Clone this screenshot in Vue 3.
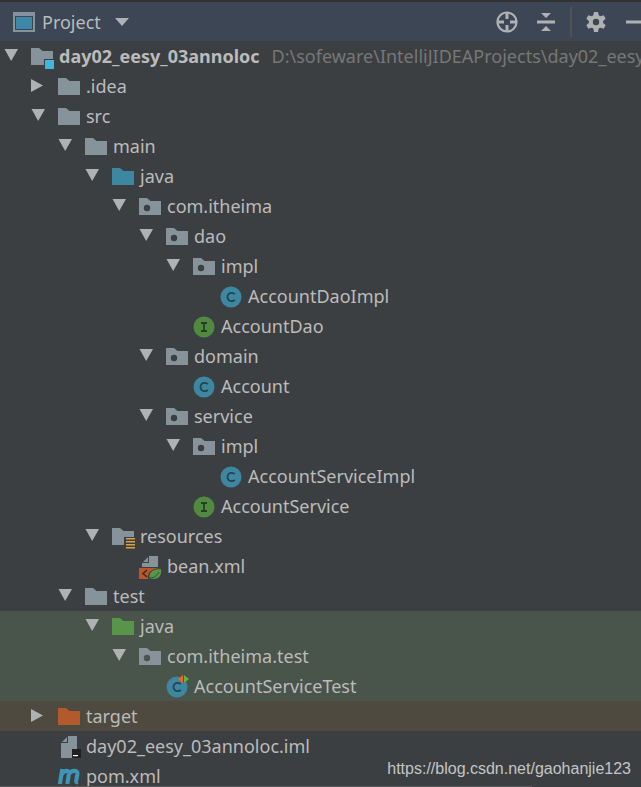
<script setup>
import { ref, computed } from 'vue'

const nodes = [
  { name: 'day02_eesy_03annoloc', depth: 0, icon: 'module', branch: true, open: true, path: 'D:\\sofeware\\IntelliJIDEAProjects\\day02_eesy_03annoloc' },
  { name: '.idea', depth: 1, icon: 'folder', branch: true, open: false },
  { name: 'src', depth: 1, icon: 'folder', branch: true, open: true },
  { name: 'main', depth: 2, icon: 'folder', branch: true, open: true },
  { name: 'java', depth: 3, icon: 'source', branch: true, open: true },
  { name: 'com.itheima', depth: 4, icon: 'package', branch: true, open: true },
  { name: 'dao', depth: 5, icon: 'package', branch: true, open: true },
  { name: 'impl', depth: 6, icon: 'package', branch: true, open: true },
  { name: 'AccountDaoImpl', depth: 7, icon: 'class' },
  { name: 'AccountDao', depth: 6, icon: 'interface' },
  { name: 'domain', depth: 5, icon: 'package', branch: true, open: true },
  { name: 'Account', depth: 6, icon: 'class' },
  { name: 'service', depth: 5, icon: 'package', branch: true, open: true },
  { name: 'impl', depth: 6, icon: 'package', branch: true, open: true },
  { name: 'AccountServiceImpl', depth: 7, icon: 'class' },
  { name: 'AccountService', depth: 6, icon: 'interface' },
  { name: 'resources', depth: 3, icon: 'resources', branch: true, open: true },
  { name: 'bean.xml', depth: 4, icon: 'spring' },
  { name: 'test', depth: 2, icon: 'folder', branch: true, open: true },
  { name: 'java', depth: 3, icon: 'tests', branch: true, open: true, tone: 'green' },
  { name: 'com.itheima.test', depth: 4, icon: 'package', branch: true, open: true, tone: 'green' },
  { name: 'AccountServiceTest', depth: 5, icon: 'testclass', tone: 'green' },
  { name: 'target', depth: 1, icon: 'excluded', branch: true, open: false, tone: 'brown' },
  { name: 'day02_eesy_03annoloc.iml', depth: 1, icon: 'iml' },
  { name: 'pom.xml', depth: 1, icon: 'maven' },
]

const tree = ref(nodes)
const folderIcons = ['module', 'folder', 'source', 'package', 'resources', 'tests', 'excluded']
const folderColors = { source: '#3d87a1', tests: '#58944a', excluded: '#b35a2c' }

const visible = computed(() => {
  const rows = []
  let hiddenBelow = Infinity
  for (const node of tree.value) {
    if (node.depth > hiddenBelow) continue
    hiddenBelow = node.branch && !node.open ? node.depth : Infinity
    rows.push(node)
  }
  return rows
})
</script>

<template>
  <main class="panel">
    <header class="bar">
      <button class="view" type="button">
        <svg class="window" viewBox="0 0 22 20" aria-hidden="true">
          <path fill="#87939a" d="M0 0h22v20H0z" />
          <path fill="#3c4654" d="M2 4h18v14H2z" />
          <path fill="#3d87a8" d="M3 5h16v12H3z" />
        </svg>
        <span>Project</span>
        <svg class="caret" viewBox="0 0 14 8" aria-hidden="true"><path fill="#afb1b3" d="M0 0h14L7 8z" /></svg>
      </button>
      <div class="tools">
        <button type="button" class="tool" aria-label="Select opened file">
          <svg viewBox="0 0 22 22" width="22" height="22">
            <circle cx="11" cy="11" r="9.5" fill="none" stroke="#afb1b3" stroke-width="2.2" />
            <path fill="none" stroke="#afb1b3" stroke-width="3" d="M11 1v7M11 14v7M1 11h7M14 11h7" />
          </svg>
        </button>
        <button type="button" class="tool" aria-label="Collapse all">
          <svg viewBox="0 0 22 22" width="22" height="22">
            <path fill="#afb1b3" d="M2 9.500h18v3H2zM6 2h10l-5 5zM6 20h10l-5-5z" />
          </svg>
        </button>
        <span class="divider"></span>
        <button type="button" class="tool" aria-label="Settings">
          <svg viewBox="0 0 22 22" width="22" height="22">
            <circle cx="11" cy="11" r="5.200" fill="none" stroke="#afb1b3" stroke-width="4" />
            <path fill="#afb1b3" d="M8.200 5l.8-4h4l.8 4zM8.200 17l.8 4h4l.8-4z" />
            <path fill="#afb1b3" transform="rotate(60 11 11)" d="M8.200 5l.8-4h4l.8 4zM8.200 17l.8 4h4l.8-4z" />
            <path fill="#afb1b3" transform="rotate(120 11 11)" d="M8.200 5l.8-4h4l.8 4zM8.200 17l.8 4h4l.8-4z" />
          </svg>
        </button>
        <button type="button" class="tool hide" aria-label="Hide">
          <svg viewBox="0 0 15 22" width="15" height="22"><path fill="#afb1b3" d="M0 9.500h15v3H0z" /></svg>
        </button>
      </div>
    </header>

    <ul class="tree" role="tree">
      <li
        v-for="(node, i) in visible"
        :key="i"
        class="row"
        :class="node.tone"
        role="treeitem"
        :aria-level="node.depth + 1"
        :aria-expanded="node.branch ? node.open : undefined"
        :style="{ '--depth': node.depth }"
      >
        <button v-if="node.branch" class="fold" type="button" :aria-label="node.open ? 'Collapse' : 'Expand'" @click="node.open = !node.open">
          <svg viewBox="0 0 14 14" width="14" height="14">
            <path fill="#afb1b3" :d="node.open ? 'M-.5 0h13.500L6.200 12z' : 'M-1 0l12 6.500L-1 13z'" />
          </svg>
        </button>
        <span v-else class="fold"></span>

        <svg class="icon" viewBox="0 0 24 24" aria-hidden="true">
          <template v-if="folderIcons.includes(node.icon)">
            <path :fill="folderColors[node.icon] || '#87939a'" d="M0 4h8l3.500 3H22v14H0z" />
            <circle v-if="node.icon === 'package'" class="hole" cx="8" cy="14" r="3.200" />
            <path v-if="node.icon === 'module'" fill="#3c3f41" d="M13 15h11v9H13z" />
            <path v-if="node.icon === 'module'" fill="#40b6e0" d="M14 16h9v9h-9z" />
            <template v-if="node.icon === 'resources'">
              <path fill="#3c3f41" d="M12 13h12v11H12z" />
              <path fill="#d9a343" d="M14 14h9v1.500h-9zM14 17h9v1.500h-9zM14 20h9v1.500h-9zM14 23h9v1.500h-9z" />
            </template>
          </template>
          <template v-else-if="node.icon === 'class' || node.icon === 'testclass'">
            <circle cx="11" cy="13" r="10.500" fill="#3d87a1" />
            <path fill="none" stroke="#25434e" stroke-width="1.800" d="M14.800 10.200A4.200 4.200 0 1 0 14.800 15.800" />
            <template v-if="node.icon === 'testclass'">
              <path fill="#49544a" d="M11 0h13v5.500L18 9z" />
              <path fill="#f26522" d="M17 1v8L12 5z" />
              <path fill="#62b543" d="M18 1v8L23 5z" />
            </template>
          </template>
          <template v-else-if="node.icon === 'interface'">
            <circle cx="11" cy="13" r="10.500" fill="#4f8a40" />
            <path fill="none" stroke="#293f25" stroke-width="1.800" d="M8 9h6M8 17h6M11 9v8" />
          </template>
          <template v-else-if="node.icon === 'spring'">
            <path fill="#87939a" d="M10 2h9v11H3V9h7zM9 3v5H4z" />
            <path fill="#bd5528" d="M0 14h22v11H0z" />
            <path fill="none" stroke="#43291f" stroke-width="1.600" d="M8 16l-4 3.500L8 23" />
            <path fill="#3c3f41" d="M9 25c-1-7 4-11 14-11v11z" />
            <path fill="#58944a" d="M11 25c-2-6 2-10 11-10 1 6-2 10-7 10-2 0-3-.5-4 0z" />
            <path fill="none" stroke="#2e4f2a" d="M11 24c5 0 7-3 9-6" />
          </template>
          <template v-else-if="node.icon === 'iml'">
            <path fill="#87939a" d="M10 2h9v22H3V9h7zM9 3v5H4z" />
            <path fill="#231f20" d="M14 15h9v9h-9z" />
            <path fill="#fff" d="M15 21h5v1.200h-5z" />
          </template>
          <template v-else>
            <path fill="none" stroke="#3f95b5" stroke-width="4.200" d="M4.300 5L1.900 20M3.500 10.500C6 6 11.500 5.500 10.900 10L9.300 20M11 10C13.500 6 20 5.500 19.400 10L18.200 17q-.2 1.500 1.800 1.200" />
          </template>
        </svg>

        <span class="name" :class="{ root: node.depth === 0 }">{{ node.name }}</span>
        <span v-if="node.path" class="path">{{ node.path }}</span>
      </li>
    </ul>

    <a class="credit" href="https://blog.csdn.net/gaohanjie123">https://blog.csdn.net/gaohanjie123</a>
  </main>
</template>

<style>
body {
  background: #3c3f41;
}
</style>

<style scoped>
.panel {
  position: relative;
  box-sizing: border-box;
  height: 100vh;
  overflow: hidden;
  border-top: 2px solid #323232;
  background: #3c3f41;
  color: #bbbbbb;
  font-family: "Noto Sans", "Open Sans", sans-serif;
  font-size: 18px;
}

.panel::after {
  content: "";
  position: absolute;
  bottom: 0;
  left: 0;
  width: 83%;
  height: 1px;
  background: #5a5a5a;
}

button {
  display: flex;
  align-items: center;
  padding: 0;
  border: 0;
  background: none;
  color: inherit;
  font: inherit;
}

.bar {
  display: flex;
  align-items: center;
  justify-content: space-between;
  height: 39px;
  padding-left: 13px;
  background: #3c4654;
}

.view {
  gap: 7px;
}

.window {
  width: 22px;
  height: 20px;
}

.caret {
  width: 14px;
  height: 8px;
  margin-left: 7px;
}

.tools {
  display: flex;
  align-items: center;
}

.tool {
  margin-right: 17px;
}

.divider {
  width: 2px;
  height: 30px;
  margin-right: 13px;
  margin-left: -4px;
  background: #515151;
}

.tool svg {
  display: block;
}

.divider + .tool {
  margin-right: 19px;
}

.tool.hide {
  margin-right: 0;
}

.tree {
  margin: 0;
  padding: 0;
  list-style: none;
}

.row {
  --surface: #3c3f41;
  display: flex;
  align-items: center;
  height: 30px;
  padding-left: calc(5px + 27px * var(--depth));
  background: var(--surface);
  line-height: 30px;
  white-space: nowrap;
}

.green {
  --surface: #49544a;
}

.brown {
  --surface: #4f4a3f;
}

.fold {
  flex: none;
  width: 14px;
  height: 14px;
  margin-right: 12px;
}

.fold svg {
  overflow: visible;
}

.icon {
  flex: none;
  width: 24px;
  height: 24px;
  margin-right: 4px;
  overflow: visible;
}

.hole {
  fill: var(--surface);
}

.root {
  font-weight: 700;
}

.path {
  margin-left: 12px;
  color: #777777;
}

.credit {
  position: absolute;
  right: 10px;
  bottom: 7px;
  color: #c4c5c6;
  font-family: "Liberation Sans", sans-serif;
  font-size: 16px;
  line-height: 22px;
  text-decoration: none;
}
</style>
